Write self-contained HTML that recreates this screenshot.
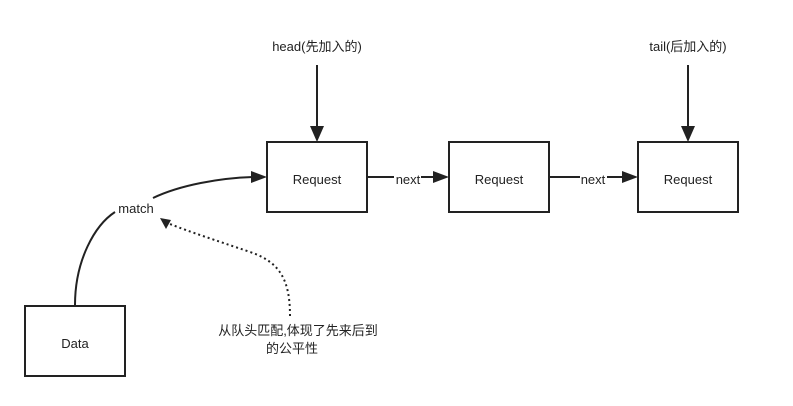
<!DOCTYPE html>
<html><head><meta charset="utf-8"><style>
body{margin:0;background:#fff;width:793px;height:401px;overflow:hidden}
text{font-family:"Liberation Sans","Noto Sans CJK SC",sans-serif;font-size:13px;fill:#222}
</style></head><body>
<svg width="793" height="401" xmlns="http://www.w3.org/2000/svg">
<g fill="none" stroke="#222" stroke-width="2">
<rect x="267" y="142" width="100" height="70"/>
<rect x="449" y="142" width="100" height="70"/>
<rect x="638" y="142" width="100" height="70"/>
<rect x="25" y="306" width="100" height="70"/>
<line x1="317" y1="65" x2="317" y2="128"/>
<line x1="688" y1="65" x2="688" y2="128"/>
<line x1="367" y1="177" x2="394" y2="177"/>
<line x1="421" y1="177" x2="435" y2="177"/>
<line x1="549" y1="177" x2="580" y2="177"/>
<line x1="607" y1="177" x2="624" y2="177"/>
<path d="M75 305 C75 260 95 225 115 212"/>
<path d="M153 198 C180 185 220 178 253 177"/>
<path d="M290 316 C290 280 280 262 250 252 C215 240 190 232 170 224" stroke-dasharray="2 3"/>
</g>
<g fill="#222">
<polygon points="310,126 324,126 317,142"/>
<polygon points="681,126 695,126 688,142"/>
<polygon points="433,171 433,183 449,177"/>
<polygon points="622,171 622,183 638,177"/>
<polygon points="251,171 251,183 267,177"/>
<polygon points="160,218 171,220 166,229"/>
</g>
<text x="317" y="51" text-anchor="middle">head(先加入的)</text>
<text x="688" y="51" text-anchor="middle">tail(后加入的)</text>
<text x="317" y="184" text-anchor="middle">Request</text>
<text x="499" y="184" text-anchor="middle">Request</text>
<text x="688" y="184" text-anchor="middle">Request</text>
<text x="75" y="348" text-anchor="middle">Data</text>
<text x="408" y="184" text-anchor="middle">next</text>
<text x="593" y="184" text-anchor="middle">next</text>
<text x="136" y="213" text-anchor="middle">match</text>
<text x="298" y="335" text-anchor="middle">从队头匹配,体现了先来后到</text>
<text x="292" y="353" text-anchor="middle">的公平性</text>
</svg>
</body></html>
